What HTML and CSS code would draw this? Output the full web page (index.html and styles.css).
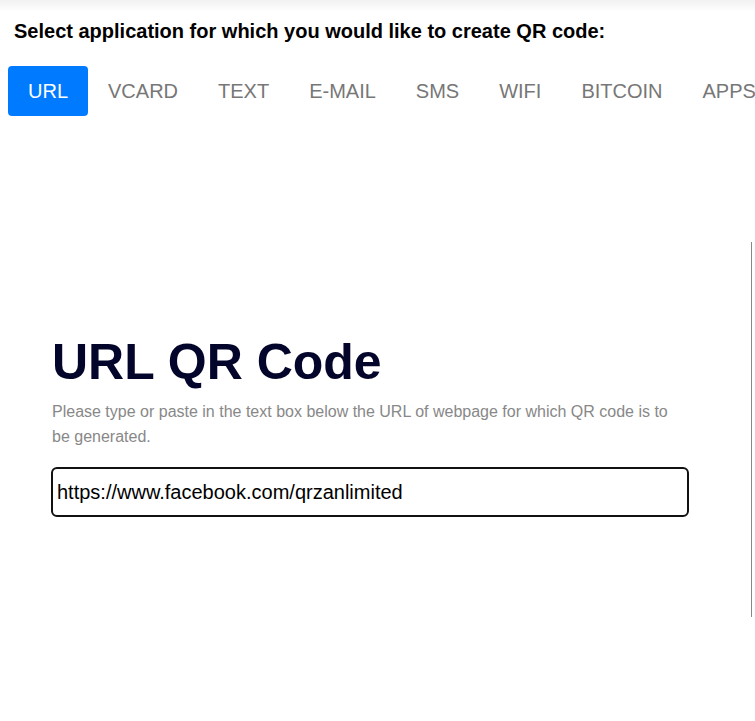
FILE: index.html
```html
<!DOCTYPE html>
<html lang="en">
<head>
<meta charset="utf-8">
<title>QR Code Generator</title>
<link rel="stylesheet" href="styles.css">
</head>
<body>
<header class="topbar">
  <h2 class="select-title">Select application for which you would like to create QR code:</h2>
  <nav class="tabs">
    <a class="tab active">URL</a>
    <a class="tab">VCARD</a>
    <a class="tab">TEXT</a>
    <a class="tab">E-MAIL</a>
    <a class="tab">SMS</a>
    <a class="tab">WIFI</a>
    <a class="tab">BITCOIN</a>
    <a class="tab">APPS</a>
  </nav>
</header>
<main class="main">
  <section class="form-col">
    <h1 class="qr-title">URL QR Code</h1>
    <p class="qr-desc">Please type or paste in the text box below the URL of webpage for which QR code is to be generated.</p>
    <input class="url-input" type="text" value="https://www.facebook.com/qrzanlimited">
  </section>
  <aside class="preview-col"></aside>
</main>
</body>
</html>
```
FILE: styles.css
```css
html, body {
  margin: 0;
  padding: 0;
  background: #fff;
  font-family: "Liberation Sans", Arial, sans-serif;
  overflow: hidden;
}
.topbar {
  background: linear-gradient(to bottom, #f1f1f1 0px, #ffffff 12px);
  padding-top: 20px;
}
.select-title {
  margin: 0 0 0 14px;
  font-size: 20px;
  line-height: 22px;
  font-weight: bold;
  color: #000;
}
.tabs {
  display: flex;
  flex-wrap: nowrap;
  margin: 24px 0 0 8px;
  white-space: nowrap;
}
.tab {
  display: block;
  flex: none;
  padding: 0 20px;
  height: 50px;
  line-height: 50px;
  font-size: 20px;
  color: #777;
  border-radius: 4px;
}
.tab.active {
  background: #007bff;
  color: #fff;
}
.main {
  display: flex;
  align-items: flex-start;
  margin-top: 126px;
  padding-left: 51px;
}
.form-col {
  width: 638px;
  flex: none;
  margin-top: 92px;
}
.qr-title {
  margin: 0;
  font-size: 50px;
  line-height: 56px;
  font-weight: bold;
  color: #03052a;
  padding-left: 1px;
}
.qr-desc {
  margin: 9px 0 18px 1px;
  font-size: 16px;
  line-height: 25px;
  color: #888;
}
.url-input {
  display: block;
  box-sizing: border-box;
  width: 638px;
  height: 50px;
  border: 2px solid #111;
  border-radius: 6px;
  padding: 0 4px;
  font-family: "Liberation Sans", Arial, sans-serif;
  font-size: 20px;
  color: #000;
  background: #fff;
  outline: none;
}
.preview-col {
  flex: none;
  margin-left: 62px;
  width: 10px;
  height: 375px;
  border-left: 1px solid #888;
}
```
